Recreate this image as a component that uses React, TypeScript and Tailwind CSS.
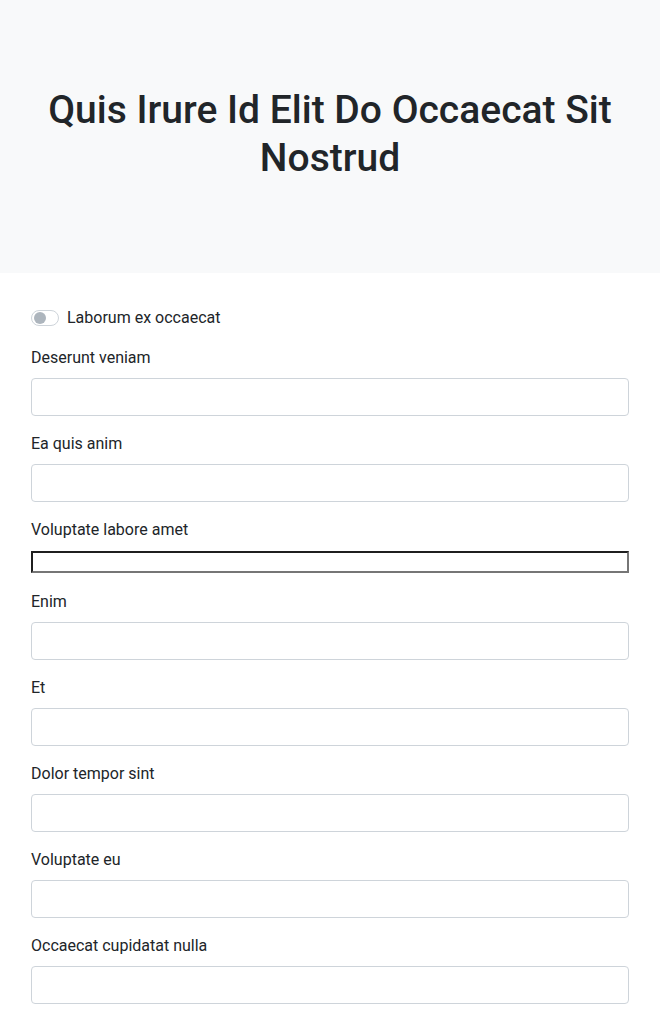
const fields = [
  "Deserunt veniam",
  "Ea quis anim",
  "Voluptate labore amet",
  "Enim",
  "Et",
  "Dolor tempor sint",
  "Voluptate eu",
  "Occaecat cupidatat nulla",
];

export default function App() {
  return (
    <div className="min-h-screen bg-white text-[#212529] font-['Roboto',sans-serif]">
      <header className="bg-[#f8f9fa] pt-[86px] pb-[91px] px-6">
        <h1 className="text-center text-[39px] leading-[48px] font-medium">
          Quis Irure Id Elit Do Occaecat Sit Nostrud
        </h1>
      </header>
      <form className="px-[31px] pt-[33px]">
        <label className="mb-4 flex items-center gap-2 text-base leading-6">
          <span className="flex h-4 w-7 items-center rounded-full border border-[#ced4da] bg-white px-[2px]">
            <span className="h-3 w-3 rounded-full bg-[#adb5bd]" />
          </span>
          Laborum ex occaecat
        </label>
        {fields.map((f, i) => (
          <div key={f} className={i === 2 ? "mb-[17px]" : "mb-4"}>
            <label className={i === 2 ? "mb-[9px] block text-base leading-6" : "mb-2 block text-base leading-6"}>
              {f}
            </label>
            {i === 2 ? (
              <input
                type="text"
                className="block h-[22px] w-full border-2 border-t-[#1f1f1f] border-l-[#1f1f1f] border-b-[#767676] border-r-[#767676] bg-white"
              />
            ) : (
              <input
                type="text"
                className="block h-[38px] w-full rounded border border-[#ced4da] bg-white px-3"
              />
            )}
          </div>
        ))}
      </form>
    </div>
  );
}
